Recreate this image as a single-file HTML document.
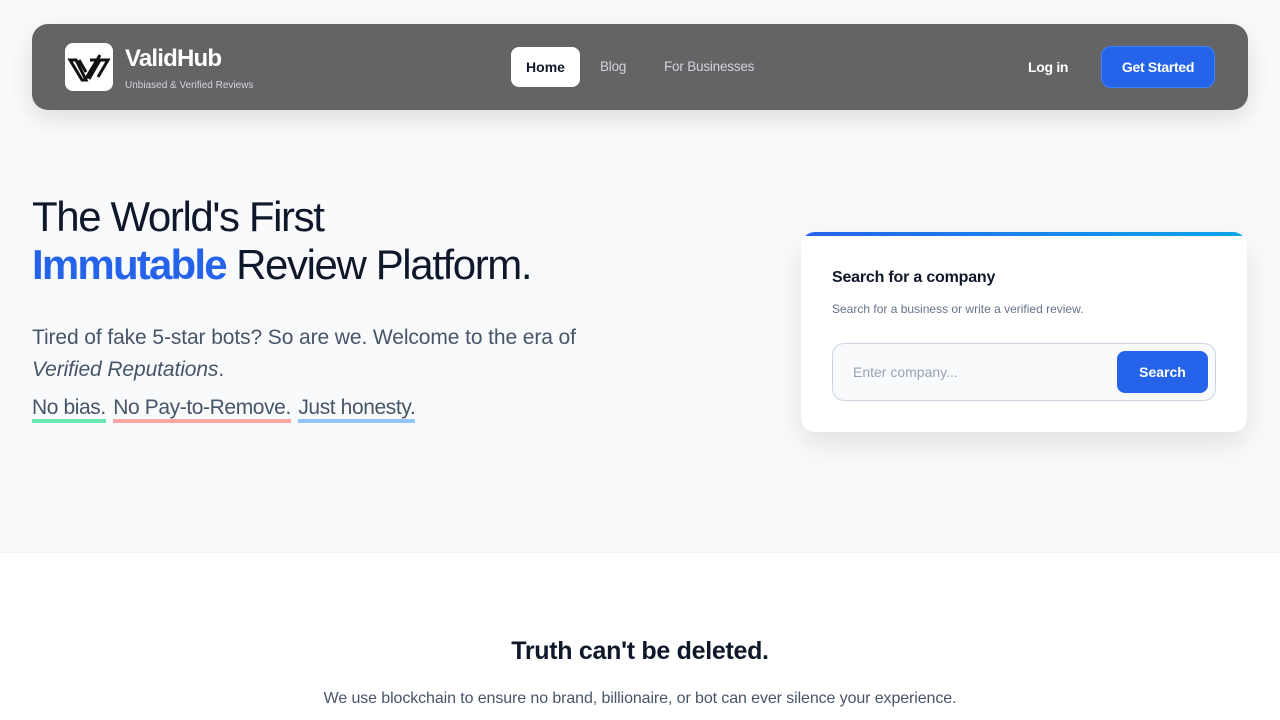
<!DOCTYPE html>
<html><head><meta charset="utf-8"><style>
*{box-sizing:border-box;margin:0;padding:0}
body{width:1280px;height:720px;overflow:hidden;background:#fff;font-family:"Liberation Sans",sans-serif;color:#0f172a}
.hero{position:absolute;left:0;top:0;width:1280px;height:553px;background:#f8fafc;border-bottom:1px solid #eef1f5}
.nav{position:absolute;left:32px;top:24px;width:1216px;height:86px;background:#636466;border-radius:16px;box-shadow:0 8px 24px rgba(0,0,0,.12)}
.logo{position:absolute;left:33px;top:19px;width:48px;height:48px;background:#fff;border-radius:8px}
.brand{position:absolute;left:93px;top:21px;color:#fff;font-weight:bold;font-size:24px;letter-spacing:-0.8px}
.tag{position:absolute;left:93px;top:56px;color:#d4d4d8;font-size:10px}
.home{position:absolute;left:479px;top:23px;width:69px;height:40px;background:#fff;border-radius:8px;font-size:14px;font-weight:bold;text-align:center;line-height:40px;color:#0f172a}
.nl{position:absolute;top:35px;font-size:13.5px;color:#d4d4d8;letter-spacing:-0.2px}
.login{position:absolute;left:996px;top:35px;font-size:14px;color:#fff;font-weight:bold;letter-spacing:-0.3px}
.gs{position:absolute;left:1069px;top:22px;width:114px;height:42px;background:#2563eb;border-radius:10px;color:#fff;font-size:14px;font-weight:bold;text-align:center;line-height:40px;border:1px solid #3b82f6;letter-spacing:-0.3px}
h1{position:absolute;left:32px;top:193px;font-weight:normal;font-size:42px;line-height:48px;letter-spacing:-1.4px;color:#0f172a}
h1 b{color:#2563eb;font-weight:bold;letter-spacing:-1.8px}
.sub{position:absolute;left:32px;top:322px;font-size:21px;line-height:32px;color:#475569;width:600px;letter-spacing:-0.1px}
.tags{position:absolute;left:32px;top:396px;font-size:21px;color:#475569;letter-spacing:-0.4px}
.tags span{border-bottom:4px solid;margin-right:2px}
.card{position:absolute;left:801px;top:232px;width:446px;height:200px;background:#fff;border-radius:14px;box-shadow:0 12px 30px rgba(0,0,0,.1);overflow:hidden}
.bar{height:4px;background:linear-gradient(90deg,#2563eb,#0ea5e9)}
.ct{position:absolute;left:31px;top:37px;font-size:16px;font-weight:bold;letter-spacing:-0.2px}
.cs{position:absolute;left:31px;top:70px;font-size:12px;color:#64748b}
.inp{position:absolute;left:31px;top:111px;width:384px;height:58px;border:1px solid #cbd5e1;border-radius:12px;background:#f8fafc}
.ph{position:absolute;left:20px;top:20px;font-size:14px;color:#94a3b8}
.sb{position:absolute;right:7px;top:7px;width:91px;height:42px;background:#2563eb;border-radius:8px;color:#fff;font-weight:bold;font-size:14px;text-align:center;line-height:42px}
h2{position:absolute;left:0;width:1280px;top:637px;text-align:center;font-size:25px;font-weight:bold;letter-spacing:-0.3px}
.p2{position:absolute;left:0;width:1280px;top:690px;text-align:center;font-size:16px;color:#475569;letter-spacing:-0.1px}
</style></head><body>
<div class="hero">
<div class="nav">
<div class="logo"><svg width="48" height="48" viewBox="0 0 48 48"><path d="M5 17 L17 37 L21 37 L11 17 Z M14 17 L21 29 M20 37 L35 12 M25 17 L35 17 L24 36 M31 17 L43 17 L33 34" stroke="#111" stroke-width="3" fill="none" stroke-linejoin="miter"/></svg></div>
<div class="brand">ValidHub</div><div class="tag">Unbiased &amp; Verified Reviews</div>
<div class="home">Home</div>
<div class="nl" style="left:568px">Blog</div>
<div class="nl" style="left:632px">For Businesses</div>
<div class="login">Log in</div>
<div class="gs">Get Started</div>
</div>
<h1>The World's First<br><b>Immutable</b> Review Platform.</h1>
<div class="sub">Tired of fake 5-star bots? So are we. Welcome to the era of <i>Verified Reputations</i>.</div>
<div class="tags"><span style="border-color:#6ee7b7">No bias.</span> <span style="border-color:#fca5a5">No Pay-to-Remove.</span> <span style="border-color:#93c5fd">Just honesty.</span></div>
<div class="card"><div class="bar"></div>
<div class="ct">Search for a company</div>
<div class="cs">Search for a business or write a verified review.</div>
<div class="inp"><div class="ph">Enter company...</div><div class="sb">Search</div></div>
</div>
</div>
<h2>Truth can't be deleted.</h2>
<div class="p2">We use blockchain to ensure no brand, billionaire, or bot can ever silence your experience.</div>
</body></html>
